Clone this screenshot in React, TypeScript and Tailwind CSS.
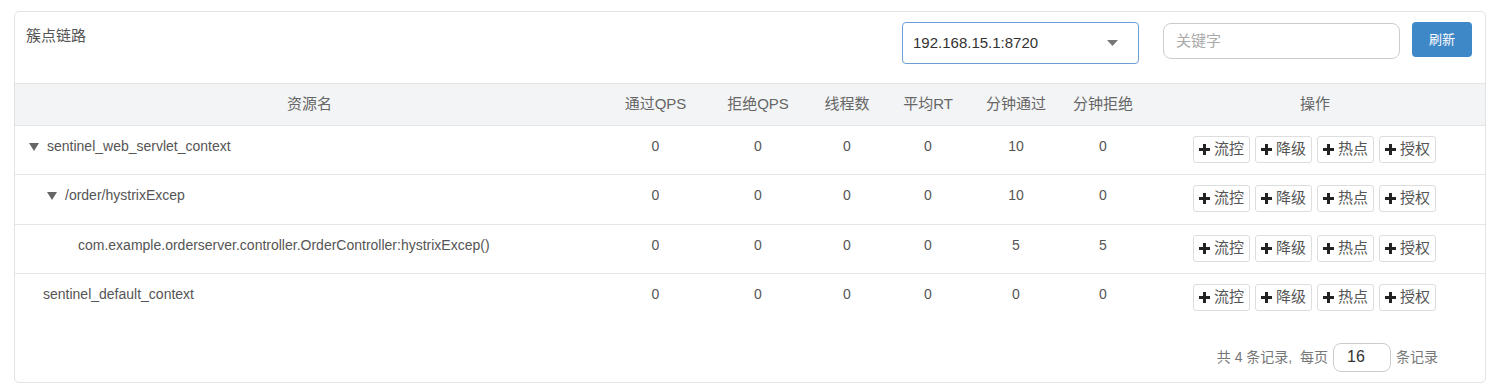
const rows = [
  { name: "sentinel_web_servlet_context", level: 0, arrow: true, h: "h-[49px]", vals: [0, 0, 0, 0, 10, 0] },
  { name: "/order/hystrixExcep", level: 1, arrow: true, h: "h-[50px]", vals: [0, 0, 0, 0, 10, 0] },
  { name: "com.example.orderserver.controller.OrderController:hystrixExcep()", level: 2, arrow: false, h: "h-[49px]", vals: [0, 0, 0, 0, 5, 5] },
  { name: "sentinel_default_context", level: -1, arrow: false, h: "h-[49px]", vals: [0, 0, 0, 0, 0, 0] },
]

const headers = ["通过QPS", "拒绝QPS", "线程数", "平均RT", "分钟通过", "分钟拒绝"]
const actions = ["流控", "降级", "热点", "授权"]

const indent: Record<number, string> = {
  [-1]: "pl-[28px]",
  0: "pl-[14px]",
  1: "pl-[32px]",
  2: "pl-[63px]",
}

const Plus = () => (
  <svg width="11" height="11" viewBox="0 0 11 11" className="shrink-0">
    <path d="M4 0h3v4h4v3H7v4H4V7H0V4h4z" fill="#222" />
  </svg>
)

const Arrow = () => (
  <svg width="10" height="8" viewBox="0 0 10 8" className="mr-[8px] mt-[1px] shrink-0">
    <path d="M0 0h10L5 8z" fill="#666" />
  </svg>
)

const App = () => {
  return (
    <div
      className="w-[1500px] h-[392px] bg-white pt-[11px] px-[14px]"
      style={{ fontFamily: '"Liberation Sans", Arial, "Noto Sans CJK SC", sans-serif' }}
    >
      <div className="border border-[#e3e3e3] rounded-[5px] bg-white h-[372px] overflow-hidden">
        {/* header */}
        <div className="flex items-start h-[71px] pl-[11px] pr-[13px] pt-[10px]">
          <h3 className="text-[15px] leading-[20px] text-[#555] mt-[4px]">簇点链路</h3>
          <div className="ml-auto flex items-start">
            <div className="w-[237px] h-[42px] border border-[#6b9fd3] rounded-[4px] flex items-center pl-[10px] pr-[20px]">
              <span className="text-[15px] text-[#333]">192.168.15.1:8720</span>
              <svg width="11" height="6" viewBox="0 0 11 6" className="ml-auto">
                <path d="M0 0h11L5.5 6z" fill="#777" />
              </svg>
            </div>
            <div className="ml-[24px] mt-[1px] w-[237px] h-[36px] border border-[#ccc] rounded-[8px] flex items-center pl-[12px]">
              <span className="text-[15px] text-[#aaa]">关键字</span>
            </div>
            <button className="ml-[12px] w-[60px] h-[35px] rounded-[4px] bg-[#3f88c8] text-white text-[13px]">刷新</button>
          </div>
        </div>

        {/* table */}
        <table className="w-full table-fixed border-collapse">
          <colgroup>
            <col className="w-[589px]" />
            <col className="w-[103px]" />
            <col className="w-[102px]" />
            <col className="w-[76px]" />
            <col className="w-[86px]" />
            <col className="w-[90px]" />
            <col className="w-[84px]" />
            <col />
          </colgroup>
          <thead>
            <tr className="h-[42px] bg-[#f3f4f5] border-y border-[#e6e6e6]">
              <th className="font-normal text-[15px] text-[#666] text-center">资源名</th>
              {headers.map((h) => (
                <th key={h} className="font-normal text-[15px] text-[#666] text-center">{h}</th>
              ))}
              <th className="font-normal text-[15px] text-[#666] text-center">操作</th>
            </tr>
          </thead>
          <tbody>
            {rows.map((r, i) => (
              <tr key={i} className={`${r.h} ${i < rows.length - 1 ? "border-b border-[#e6e6e6]" : ""}`}>
                <td className={`align-top pt-[10px] ${indent[r.level]}`}>
                  <div className="flex items-center text-[14px] leading-[20px] text-[#555]">
                    {r.arrow && <Arrow />}
                    <span className="whitespace-nowrap">{r.name}</span>
                  </div>
                </td>
                {r.vals.map((v, j) => (
                  <td key={j} className="align-top pt-[10px] text-center text-[14px] leading-[20px] text-[#555]">{v}</td>
                ))}
                <td className="align-top pt-[10px] pl-[48px]">
                  <div className="flex gap-[5px]">
                    {actions.map((a) => (
                      <button
                        key={a}
                        className="w-[57px] h-[27px] border border-[#ddd] rounded-[3px] bg-white flex items-center justify-center gap-[4px] text-[15px] text-[#555]"
                      >
                        <Plus />
                        <span>{a}</span>
                      </button>
                    ))}
                  </div>
                </td>
              </tr>
            ))}
          </tbody>
        </table>

        {/* pagination */}
        <div className="flex items-center justify-end pr-[47px] pt-[20px] text-[14px] text-[#777]">
          <span className="whitespace-pre">共 4 条记录,  每页</span>
          <div className="ml-[5px] w-[58px] h-[29px] border border-[#ccc] rounded-[8px] flex items-center pl-[13px] text-[16px] text-[#333]">16</div>
          <span className="ml-[5px]">条记录</span>
        </div>
      </div>
    </div>
  )
}

export default App
